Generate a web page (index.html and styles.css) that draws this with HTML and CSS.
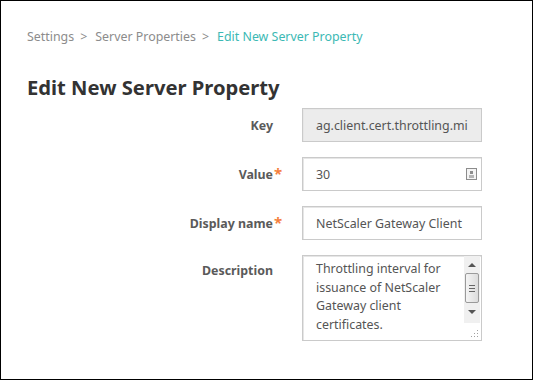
FILE: index.html
```html
<!DOCTYPE html>
<html lang="en">
<head>
    <meta charset="UTF-8">
    <title>Edit New Server Property</title>
    <link rel="stylesheet" href="styles.css">
</head>
<body>
    <div class="page">
        <div class="crumbs">
            <span class="crumb">Settings</span>
            <span class="sep">&gt;</span>
            <span class="crumb">Server Properties</span>
            <span class="sep">&gt;</span>
            <span class="crumb current">Edit New Server Property</span>
        </div>
        <h1 class="title">Edit New Server Property</h1>
        <div class="form">
            <label class="label">Key</label>
            <div class="field readonly">ag.client.cert.throttling.mi</div>

            <label class="label required">Value</label>
            <div class="field">
                <span>30</span>
                <svg class="spin" width="11" height="12" viewBox="0 0 11 12">
                    <rect x="0.5" y="0.5" width="10" height="11" fill="#f4f4f4" stroke="#8c8c8c"/>
                    <rect x="4" y="3" width="3" height="3" fill="#8c8c8c"/>
                    <rect x="3" y="7" width="5" height="3" fill="#b4b4b4"/>
                </svg>
            </div>

            <label class="label required">Display name</label>
            <div class="field">NetScaler Gateway Client</div>

            <label class="label top">Description</label>
            <div class="area">
                <div class="area-text">Throttling interval for issuance of NetScaler Gateway client certificates.</div>
                <div class="scroll">
                    <div class="arrow up"></div>
                    <div class="thumb">
                        <i></i><i></i><i></i>
                    </div>
                    <div class="arrow down"></div>
                </div>
                <div class="grip"></div>
            </div>
        </div>
    </div>
</body>
</html>
```

FILE: styles.css
```css
html, body {
    margin: 0;
    padding: 0;
}
body {
    width: 533px;
    height: 380px;
    box-sizing: border-box;
    border: 1px solid #000;
    background-color: #fff;
    font-family: "Noto Sans", "Open Sans", sans-serif;
    color: #555;
}
.page {
    padding: 27px 26px 0 26px;
}
.crumbs {
    display: flex;
    align-items: center;
    font-size: 12.4px;
    line-height: 18px;
    color: #8c8c8c;
}
.sep {
    margin: 0 8px 0 6px;
}
.current {
    color: #3cb9b4;
}
.title {
    margin: 27px 0 7px 0;
    font-size: 20.2px;
    line-height: 28px;
    font-weight: bold;
    color: #333;
}
.form {
    display: grid;
    grid-template-columns: 246px 180px;
    grid-auto-rows: 34px;
    column-gap: 29px;
    row-gap: 15px;
}
.label {
    position: relative;
    justify-self: end;
    align-self: center;
    font-size: 12.4px;
    font-weight: bold;
    color: #5a5a5a;
}
.label.top {
    align-self: start;
    padding-top: 7px;
}
.required::after {
    content: "*";
    position: absolute;
    left: 100%;
    top: -3px;
    margin-left: 1px;
    color: #f5803e;
    font-size: 15px;
}
.field {
    display: flex;
    align-items: center;
    justify-content: space-between;
    box-sizing: border-box;
    padding: 0 4px 0 13px;
    border: 1px solid #cacaca;
    box-shadow: inset 1px 1px 0 #e6e6e6;
    font-size: 12.4px;
    color: #555;
    white-space: nowrap;
    overflow: hidden;
}
.readonly {
    background-color: #ececec;
}
.spin {
    display: block;
}
.area {
    grid-row: span 2;
    height: 86px;
    box-sizing: border-box;
    border: 1px solid #cacaca;
    box-shadow: inset 1px 1px 0 #e6e6e6;
    display: flex;
    position: relative;
    overflow: hidden;
}
.area-text {
    flex: 1;
    padding: 4px 4px 0 13px;
    font-size: 12.4px;
    line-height: 18.7px;
    color: #555;
}
.scroll {
    width: 16px;
    height: 67px;
    margin-right: 1px;
    background-color: #f0f0f0;
    display: flex;
    flex-direction: column;
    align-items: center;
}
.arrow {
    width: 0;
    height: 0;
    border-left: 4px solid transparent;
    border-right: 4px solid transparent;
}
.arrow.up {
    margin: 7px 0 6px 0;
    border-bottom: 4px solid #555;
}
.arrow.down {
    margin: 7px 0 0 0;
    border-top: 4px solid #555;
}
.thumb {
    width: 14px;
    height: 30px;
    box-sizing: border-box;
    border: 1px solid #9a9a9a;
    border-radius: 2px;
    background: linear-gradient(to right, #f4f4f4, #dcdcdc);
    display: flex;
    flex-direction: column;
    align-items: center;
    justify-content: center;
    gap: 2px;
}
.thumb i {
    display: block;
    width: 6px;
    height: 1px;
    background-color: #666;
}
.grip {
    position: absolute;
    right: 3px;
    bottom: 3px;
    width: 8px;
    height: 8px;
    background: radial-gradient(circle, #a0a0a0 0.6px, transparent 0.9px) 0 0 / 3px 3px;
    clip-path: polygon(100% 0, 100% 100%, 0 100%);
}
```
